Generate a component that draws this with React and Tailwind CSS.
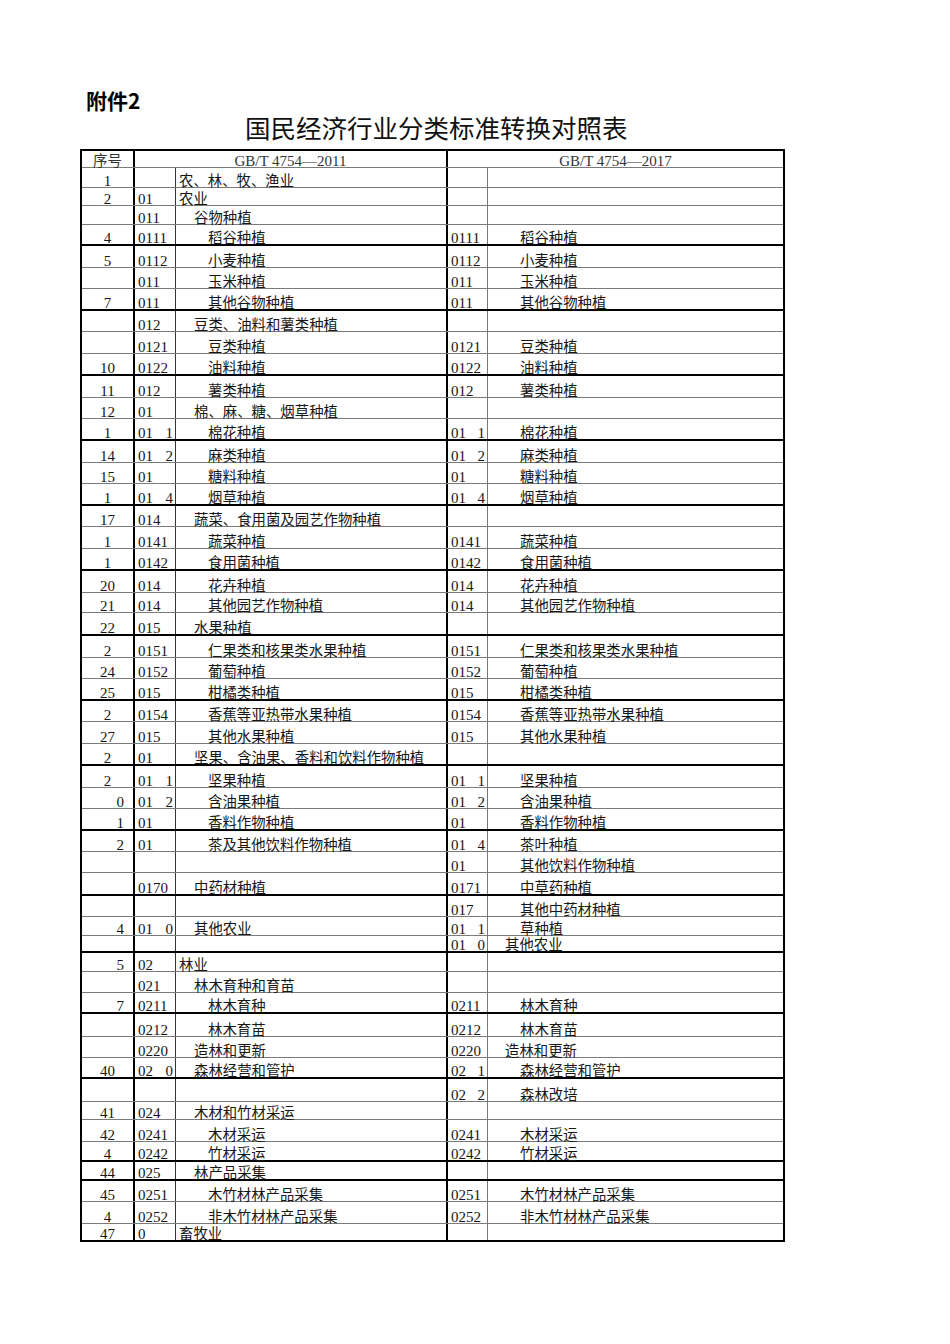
import React from "react";

const H = {
  16: "h-[16px]",
  17: "h-[17px]",
  18: "h-[18px]",
  19: "h-[19px]",
  20: "h-[20px]",
  21: "h-[21px]",
  22: "h-[22px]",
  23: "h-[23px]",
};
const LI = { 0: "pl-[3px]", 1: "pl-[18px]", 2: "pl-[32px]" };
const RI = { 0: "pl-[3px]", 1: "pl-[17px]", 2: "pl-[32px]" };

// [height, thick, seq, code, name, level, rcode, rname, rlevel]
const rows = [
  [20, 0, "1", "", "农、林、牧、渔业", 0, "", "", 0],
  [18, 0, "2", "01", "农业", 0, "", "", 0],
  [19, 0, "", "011", "谷物种植", 1, "", "", 0],
  [21, 1, "4", "0111", "稻谷种植", 2, "0111", "稻谷种植", 2],
  [22, 0, "5", "0112", "小麦种植", 2, "0112", "小麦种植", 2],
  [21, 0, "", "011", "玉米种植", 2, "011", "玉米种植", 2],
  [22, 1, "7", "011", "其他谷物种植", 2, "011", "其他谷物种植", 2],
  [21, 0, "", "012", "豆类、油料和薯类种植", 1, "", "", 0],
  [22, 0, "", "0121", "豆类种植", 2, "0121", "豆类种植", 2],
  [22, 1, "10", "0122", "油料种植", 2, "0122", "油料种植", 2],
  [22, 0, "11", "012", "薯类种植", 2, "012", "薯类种植", 2],
  [21, 0, "12", "01", "棉、麻、糖、烟草种植", 1, "", "", 0],
  [22, 1, "1", "01|1", "棉花种植", 2, "01|1", "棉花种植", 2],
  [22, 0, "14", "01|2", "麻类种植", 2, "01|2", "麻类种植", 2],
  [21, 0, "15", "01", "糖料种植", 2, "01", "糖料种植", 2],
  [22, 1, "1", "01|4", "烟草种植", 2, "01|4", "烟草种植", 2],
  [21, 0, "17", "014", "蔬菜、食用菌及园艺作物种植", 1, "", "", 0],
  [22, 0, "1", "0141", "蔬菜种植", 2, "0141", "蔬菜种植", 2],
  [22, 1, "1", "0142", "食用菌种植", 2, "0142", "食用菌种植", 2],
  [22, 0, "20", "014", "花卉种植", 2, "014", "花卉种植", 2],
  [20, 0, "21", "014", "其他园艺作物种植", 2, "014", "其他园艺作物种植", 2],
  [23, 1, "22", "015", "水果种植", 1, "", "", 0],
  [22, 0, "2", "0151", "仁果类和核果类水果种植", 2, "0151", "仁果类和核果类水果种植", 2],
  [21, 0, "24", "0152", "葡萄种植", 2, "0152", "葡萄种植", 2],
  [22, 1, "25", "015", "柑橘类种植", 2, "015", "柑橘类种植", 2],
  [21, 0, "2", "0154", "香蕉等亚热带水果种植", 2, "0154", "香蕉等亚热带水果种植", 2],
  [22, 0, "27", "015", "其他水果种植", 2, "015", "其他水果种植", 2],
  [22, 1, "2", "01", "坚果、含油果、香料和饮料作物种植", 1, "", "", 0],
  [22, 0, "2", "01|1", "坚果种植", 2, "01|1", "坚果种植", 2],
  [21, 0, ">0", "01|2", "含油果种植", 2, "01|2", "含油果种植", 2],
  [22, 1, ">1", "01", "香料作物种植", 2, "01", "香料作物种植", 2],
  [21, 0, ">2", "01", "茶及其他饮料作物种植", 2, "01|4", "茶叶种植", 2],
  [21, 0, "", "", "", 0, "01", "其他饮料作物种植", 2],
  [23, 1, "", "0170", "中药材种植", 1, "0171", "中草药种植", 2],
  [21, 0, "", "", "", 0, "017", "其他中药材种植", 2],
  [19, 0, ">4", "01|0", "其他农业", 1, "01|1", "草种植", 2],
  [17, 1, "", "", "", 0, "01|0", "其他农业", 1],
  [19, 0, ">5", "02", "林业", 0, "", "", 0],
  [21, 0, "", "021", "林木育种和育苗", 1, "", "", 0],
  [21, 1, ">7", "0211", "林木育种", 2, "0211", "林木育种", 2],
  [23, 0, "", "0212", "林木育苗", 2, "0212", "林木育苗", 2],
  [21, 0, "", "0220", "造林和更新", 1, "0220", "造林和更新", 1],
  [21, 1, "40", "02|0", "森林经营和管护", 1, "02|1", "森林经营和管护", 2],
  [23, 0, "", "", "", 0, "02|2", "森林改培", 2],
  [18, 0, "41", "024", "木材和竹材采运", 1, "", "", 0],
  [22, 0, "42", "0241", "木材采运", 2, "0241", "木材采运", 2],
  [20, 1, "4", "0242", "竹材采运", 2, "0242", "竹材采运", 2],
  [19, 1, "44", "025", "林产品采集", 1, "", "", 0],
  [21, 0, "45", "0251", "木竹材林产品采集", 2, "0251", "木竹材林产品采集", 2],
  [22, 0, "4", "0252", "非木竹材林产品采集", 2, "0252", "非木竹材林产品采集", 2],
  [18, 1, "47", "0", "畜牧业", 0, "", "", 0],
];

const FONT = "font-['Liberation_Serif','Noto_Sans_CJK_SC',serif]";

function Code({ v }) {
  if (!v) return null;
  const parts = v.split("|");
  if (parts.length === 1) {
    return <span className="translate-y-[2px] text-[15px] leading-none">{v}</span>;
  }
  return (
    <span className="flex w-full translate-y-[2px] justify-between pr-[2px] text-[15px] leading-none">
      <span>{parts[0]}</span>
      <span>{parts[1]}</span>
    </span>
  );
}

function Row({ r }) {
  const [h, thick, seq, code, name, lvl, rcode, rname, rlvl] = r;
  const right = seq.startsWith(">");
  const s = right ? seq.slice(1) : seq;
  return (
    <div
      className={`grid grid-cols-[53px_41px_272px_40px_295px] ${H[h]} ${
        thick ? "border-b-2 border-black" : "border-b border-[#7a7a7a]"
      }`}
    >
      <div
        className={`flex items-end border-r-2 border-black ${
          right ? "justify-end pr-[9px]" : "justify-center"
        }`}
      >
        <span className="translate-y-[2px] text-[15px] leading-none">{s}</span>
      </div>
      <div className="flex items-end border-r border-[#333] pl-[3px]">
        <Code v={code} />
      </div>
      <div className={`flex items-end whitespace-nowrap border-r-2 border-black ${LI[lvl]}`}>
        <span className="translate-y-[1px] text-[14.4px] leading-none">{name}</span>
      </div>
      <div className="flex items-end border-r border-[#777] pl-[3px]">
        <Code v={rcode} />
      </div>
      <div className={`flex items-end whitespace-nowrap ${RI[rlvl]}`}>
        <span className="translate-y-[1px] text-[14.4px] leading-none">{rname}</span>
      </div>
    </div>
  );
}

export default function App() {
  return (
    <div className={`h-[1344px] w-[950px] bg-white text-[#161616] ${FONT}`}>
      <div className="pl-[86px] pt-[88px]">
        <div className="font-['Noto_Sans_CJK_SC',sans-serif] text-[21px] font-bold leading-[24px] text-black">
          附件2
        </div>
      </div>
      <div className="pl-[245px]">
        <div className="font-['Noto_Sans_CJK_SC',sans-serif] text-[25.5px] font-normal leading-[30px] text-[#111]">
          国民经济行业分类标准转换对照表
        </div>
      </div>
      <div className="ml-[80px] mt-[7px] w-[705px] border-x-2 border-t-2 border-black">
        <div className="grid h-[17px] grid-cols-[53px_313px_335px] border-b border-[#7a7a7a]">
          <div className="flex items-end justify-center border-r-2 border-black">
            <span className="translate-y-[1px] text-[14.4px] leading-none text-[#333]">序号</span>
          </div>
          <div className="flex items-end justify-center border-r-2 border-black">
            <span className="translate-y-[2px] text-[15px] leading-none text-[#333]">GB/T 4754—2011</span>
          </div>
          <div className="flex items-end justify-center">
            <span className="translate-y-[2px] text-[15px] leading-none text-[#333]">GB/T 4754—2017</span>
          </div>
        </div>
        {rows.map((r, i) => (
          <Row key={i} r={r} />
        ))}
      </div>
    </div>
  );
}
